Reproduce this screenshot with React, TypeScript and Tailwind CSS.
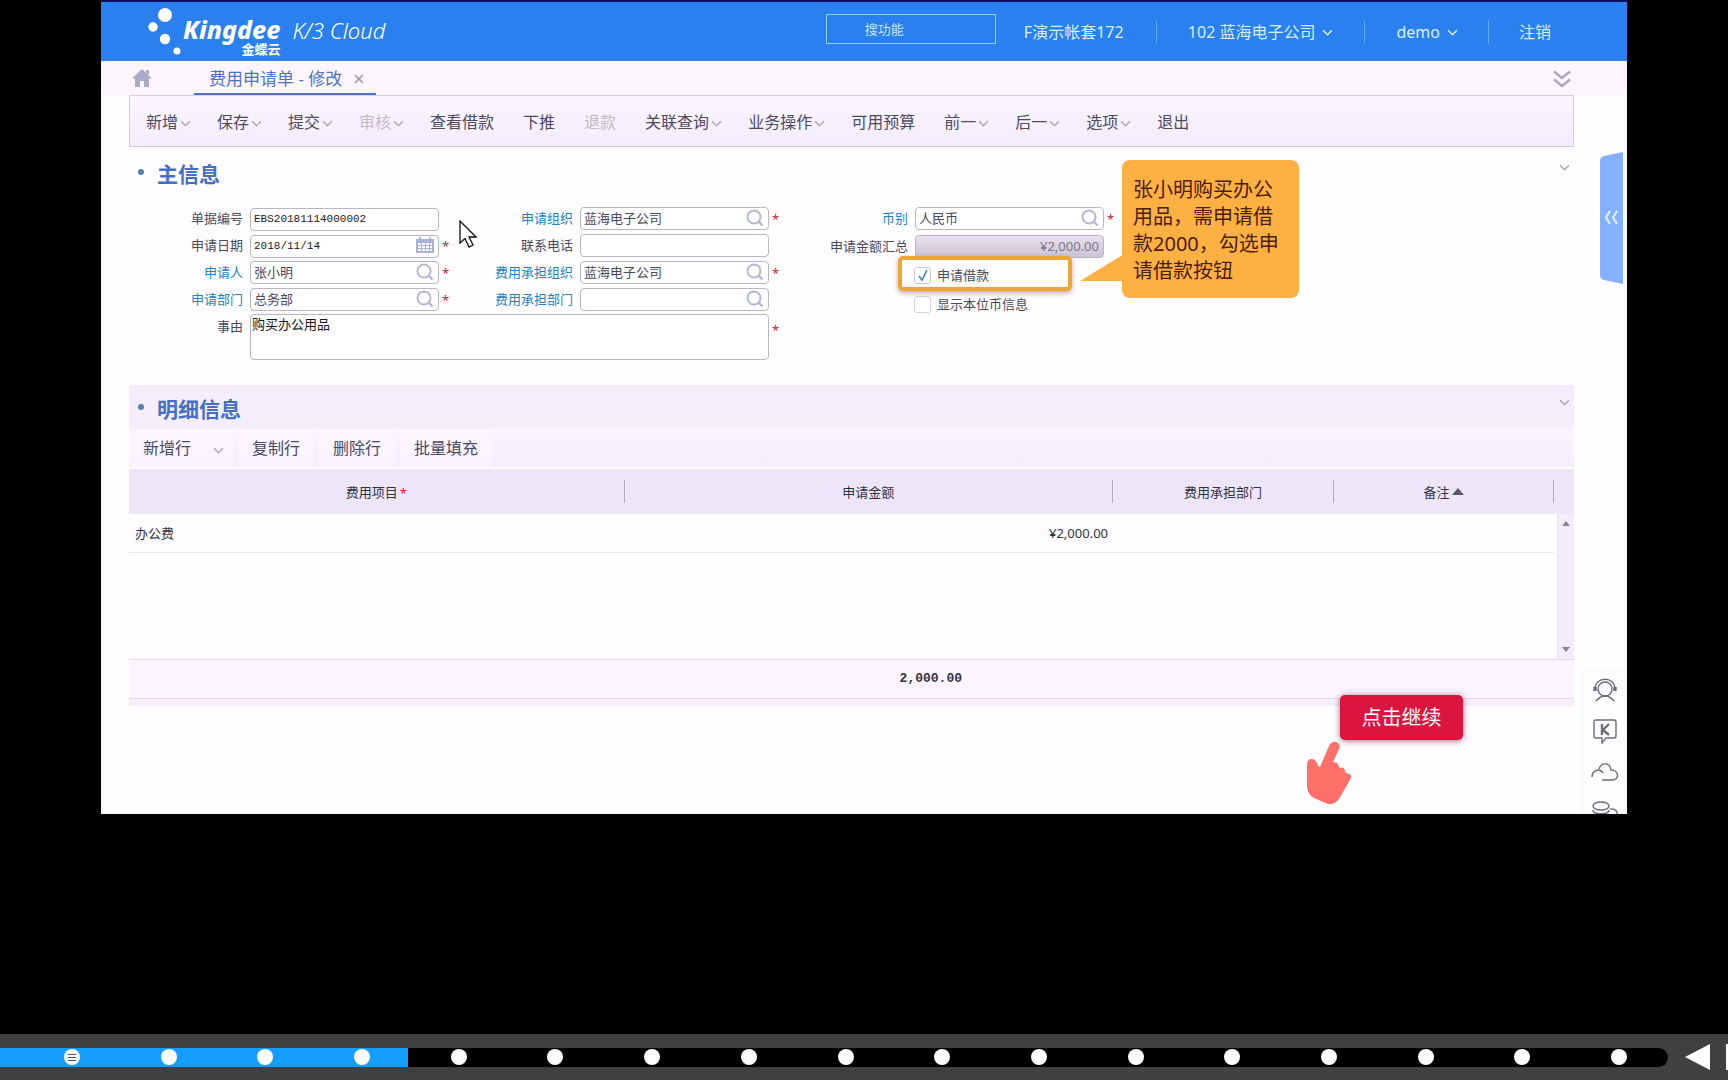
import { useState } from 'react';
import type { ReactNode } from 'react';

type Action = { label: string; menu?: boolean; disabled?: boolean };

const actions: Action[] = [
  { label: '新增', menu: true },
  { label: '保存', menu: true },
  { label: '提交', menu: true },
  { label: '审核', menu: true, disabled: true },
  { label: '查看借款' },
  { label: '下推' },
  { label: '退款', disabled: true },
  { label: '关联查询', menu: true },
  { label: '业务操作', menu: true },
  { label: '可用预算' },
  { label: '前一', menu: true },
  { label: '后一', menu: true },
  { label: '选项', menu: true },
  { label: '退出' },
];

const STEPS = 17;

const inputCls = 'w-full h-[23px] pl-[3px] pb-[2px] leading-5 rounded-[4px] border border-[#b9b5c6] bg-white focus:outline-none focus:border-[#2a82f0]';
const textCls = 'text-[13px] text-[#4b4960]';
const monoCls = 'font-[Liberation_Mono,monospace] text-[11px] text-[#1c1a24]';
const rowBtnCls = 'h-[38px] px-[14px] text-base leading-6 text-[#484a68] bg-[#fdf5fe]/70';
const dividerCls = 'w-px h-6 bg-[#5fa8f7]';

function Chevron({ className = '' }: { className?: string }) {
  return (
    <svg viewBox="0 0 12 8" className={`w-[11px] h-[7px] shrink-0 ${className}`} fill="none" stroke="currentColor" strokeWidth="1.8">
      <path d="M1 1.5 6 6.5 11 1.5" />
    </svg>
  );
}

function SearchIcon() {
  return (
    <svg viewBox="0 0 18 18" className="w-[18px] h-[18px]" fill="none" stroke="#b4b6d2" strokeWidth="2">
      <circle cx="8" cy="8" r="6.5" />
      <path d="M12.5 12.5 16.5 16.5" strokeWidth="2.4" />
    </svg>
  );
}

function CalendarIcon() {
  return (
    <svg viewBox="0 0 18 16" className="w-[18px] h-4">
      <path d="M0 2h18v14H0z" fill="#a9b3da" />
      <path d="M3 0h2v3H3zM13 0h2v3h-2z" fill="#a9b3da" />
      <path d="M2 6h3v2H2zM6 6h3v2H6zM10 6h3v2h-3zM14 6h2v2h-2zM2 9h3v2H2zM6 9h3v2H6zM10 9h3v2h-3zM14 9h2v2h-2zM2 12h3v2H2zM6 12h3v2H6zM10 12h3v2h-3zM14 12h2v2h-2z" fill="#fff" />
    </svg>
  );
}

function Star({ className = '' }: { className?: string }) {
  return <span className={`pt-[3px] text-[13px] leading-4 text-[#c81e3c] ${className}`}>*</span>;
}

type FieldProps = {
  id: string;
  label: string;
  value?: string;
  link?: boolean;
  required?: boolean;
  icon?: ReactNode;
  inputClass?: string;
};

function Field({ id, label, value = '', link, required, icon, inputClass = textCls }: FieldProps) {
  return (
    <div className="flex items-center h-[23px]">
      <label htmlFor={id} className={`w-[114px] mr-[7px] shrink-0 text-right text-[13px] leading-5 ${link ? 'text-[#2582c4]' : 'text-[#4b4960]'}`}>
        {label}
      </label>
      <div className="relative w-[189px] shrink-0">
        <input id={id} defaultValue={value} className={`${inputCls} ${inputClass}`} />
        {icon && <span className="absolute right-[5px] inset-y-0 flex items-center">{icon}</span>}
      </div>
      {required && <Star className="ml-[3px]" />}
    </div>
  );
}

function SectionTitle({ children }: { children: ReactNode }) {
  return (
    <div className="flex items-start justify-between h-[44px] pt-[8px] pl-[9px] pr-[4px]">
      <div className="flex items-start">
        <span className="w-[6px] h-[6px] mt-[11px] rounded-full bg-[#5081b8]" />
        <h2 className="ml-[13px] text-[21px] leading-8 font-bold text-[#456fc4]">{children}</h2>
      </div>
      <button aria-label="收起" className="mt-[6px] text-[#a9a3b6]"><Chevron /></button>
    </div>
  );
}

function Header() {
  return (
    <header className="flex items-start h-[61px] shrink-0 border-t-2 border-[#02105e] bg-[#2a80ef] text-[#d6efff]">
      <div className="flex items-start pl-[46px] text-white">
        <svg viewBox="0 0 36 56" className="w-9 h-14" fill="currentColor">
          <circle cx="18" cy="13" r="7" />
          <circle cx="6" cy="25" r="4.7" />
          <circle cx="18" cy="37" r="5.2" />
          <circle cx="30" cy="49" r="3.5" />
        </svg>
        <div className="flex flex-col items-end pt-[14px]">
          <span className="text-[25px] leading-[26px] font-extrabold italic">Kingdee</span>
          <span className="text-[13px] leading-[14px] font-bold">金蝶云</span>
        </div>
        <span className="ml-[12px] pt-[14px] text-[22px] leading-7 italic font-light">K/3 Cloud</span>
      </div>
      <div className="flex items-start ml-auto pt-[12px] pr-[76px] text-base leading-6">
        <input
          aria-label="搜功能"
          placeholder="搜功能"
          className="w-[170px] h-[30px] mr-[28px] pl-[38px] text-[13px] border border-[#8fd0ff] bg-transparent placeholder:text-[#c4e4ff] focus:outline-none"
        />
        <div className="flex items-center pt-[6px]">
          <span className="w-[101px]">F演示帐套172</span>
          <span className={`mx-[31px] ${dividerCls}`} />
          <button className="flex items-center gap-[7px]">102 蓝海电子公司<Chevron /></button>
          <span className={`mx-[31px] ${dividerCls}`} />
          <button className="flex items-center gap-[7px]">demo<Chevron /></button>
          <span className={`mx-[30px] ${dividerCls}`} />
          <button>注销</button>
        </div>
      </div>
    </header>
  );
}

function TabBar() {
  return (
    <nav className="flex items-stretch h-[34px] bg-[#fdf6fe] pl-[31px] pr-[55px]">
      <button aria-label="首页" className="text-[#a9a9c9]">
        <svg viewBox="0 0 20 18" className="w-5 h-[18px]" fill="currentColor">
          <path d="M10 0 20 9.5h-3V18h-5v-6H8v6H3V9.5H0L7 2.8Z" />
          <path d="M14 1h3v5l-3-2.5z" />
        </svg>
      </button>
      <div className="flex items-center ml-[42px] w-[182px] pl-[15px] pt-[4px] border-b-2 border-[#4f74bd]">
        <button className="text-[17px] leading-6 text-[#4d74c4] whitespace-nowrap">费用申请单 - 修改</button>
        <button aria-label="关闭" className="ml-[12px] text-[#9d9bb5]">
          <svg viewBox="0 0 10 10" className="w-[10px] h-[10px]" stroke="currentColor" strokeWidth="1.7">
            <path d="M1 1 9 9M9 1 1 9" />
          </svg>
        </button>
      </div>
      <button aria-label="更多" className="ml-auto self-center pt-[2px] text-[#aaa6bf]">
        <svg viewBox="0 0 20 18" className="w-5 h-[18px]" fill="none" stroke="currentColor" strokeWidth="2.4">
          <path d="M2 1.5 10 8 18 1.5M2 9.5 10 16 18 9.5" />
        </svg>
      </button>
    </nav>
  );
}

function Toolbar() {
  return (
    <div className="flex items-center gap-[29px] h-[52px] pl-[16px] pt-[2px] border border-[#d6cbe0] bg-linear-to-b from-[#fcf5fe] to-[#f2ecfd]">
      {actions.map((a) => (
        <button
          key={a.label}
          disabled={a.disabled}
          className={`flex items-center text-base leading-6 whitespace-nowrap ${a.disabled ? 'text-[#c3bacb]' : 'text-[#4c4a62]'}`}
        >
          {a.label}
          {a.menu && <Chevron className="ml-[2px] -mr-[3px] mt-[2px] text-[#b0a8c0]" />}
        </button>
      ))}
    </div>
  );
}

function Callout() {
  return (
    <div className="absolute left-[328px] -top-[46px] w-[177px] h-[138px] pl-[11px] pt-[16px] rounded-[8px] bg-[#ffb042] text-[20px] leading-[27px] text-[#4a200c] whitespace-nowrap">
      <svg viewBox="0 0 44 28" className="absolute -left-[42px] top-[94px] w-11 h-7" fill="#ffb042">
        <path d="M44 0 0 27H44Z" />
      </svg>
      <p>张小明购买办公</p>
      <p>用品，需申请借</p>
      <p>款2000，勾选申</p>
      <p>请借款按钮</p>
    </div>
  );
}

function MainInfo() {
  const [loan, setLoan] = useState(true);
  const [local, setLocal] = useState(false);

  return (
    <section className="relative pt-[3px]">
      <SectionTitle>主信息</SectionTitle>
      <div className="flex items-start pt-[12px] pb-[25px]">
        <div className="w-[665px] shrink-0">
          <div className="flex">
            <div className="flex flex-col gap-1 w-[330px]">
              <Field id="billNo" label="单据编号" value="EBS20181114000002" inputClass={monoCls} />
              <Field id="date" label="申请日期" value="2018/11/14" required icon={<CalendarIcon />} inputClass={monoCls} />
              <Field id="applicant" label="申请人" value="张小明" link required icon={<SearchIcon />} />
              <Field id="dept" label="申请部门" value="总务部" link required icon={<SearchIcon />} />
            </div>
            <div className="flex flex-col gap-1">
              <Field id="org" label="申请组织" value="蓝海电子公司" link required icon={<SearchIcon />} />
              <Field id="phone" label="联系电话" />
              <Field id="costOrg" label="费用承担组织" value="蓝海电子公司" link required icon={<SearchIcon />} />
              <Field id="costDept" label="费用承担部门" link icon={<SearchIcon />} />
            </div>
          </div>
          <div className="flex items-start mt-1">
            <label htmlFor="reason" className="w-[114px] mr-[7px] pt-[2px] text-right text-[13px] leading-5 text-[#4b4960]">事由</label>
            <textarea
              id="reason"
              defaultValue="购买办公用品"
              className="w-[519px] h-[46px] px-px text-[13px] leading-[18px] text-[#16141c] rounded-[4px] border border-[#b9b5c6] bg-white resize-none focus:outline-none"
            />
            <Star className="ml-[3px] mt-[5px]" />
          </div>
        </div>
        <div className="relative flex flex-col">
          <div className="flex flex-col gap-[5px]">
            <Field id="currency" label="币别" value="人民币" link required icon={<SearchIcon />} />
            <Field id="total" label="申请金额汇总" value="¥2,000.00" inputClass="pr-[4px] text-right text-[13px] text-[#7c7688] bg-linear-to-b from-[#e9e1ee] to-[#cbc3d4]" />
          </div>
          <label className="relative flex items-center w-[174px] h-[35px] ml-[104px] -mt-px pl-[12px] pt-[3px] rounded-[5px] border-4 border-[#eda534] bg-[#fffdff] shadow-[0_2px_5px_rgba(120,60,60,0.45)] text-[13px] leading-5 text-[#4b4960]">
            <input type="checkbox" checked={loan} onChange={(e) => setLoan(e.target.checked)} className="appearance-none w-[17px] h-[17px] mr-[6px] rounded-[3px] border border-[#cfc8dc] bg-white" />
            {loan && (
              <svg viewBox="0 0 10 12" className="absolute left-[16px] top-[9px] w-[10px] h-3 pointer-events-none" fill="none" stroke="#3d86b8" strokeWidth="1.6">
                <path d="M1 7 4 11 9 1" />
              </svg>
            )}
            申请借款
          </label>
          <label className="flex items-center h-5 ml-[120px] mt-[3px] text-[13px] leading-5 text-[#4b4960]">
            <input type="checkbox" checked={local} onChange={(e) => setLocal(e.target.checked)} className="appearance-none w-[17px] h-[17px] mr-[6px] rounded-[3px] border border-[#d8d0e2] bg-white" />
            显示本位币信息
          </label>
          <Callout />
        </div>
      </div>

      {/* Mouse pointer */}
      <svg viewBox="0 0 18 28" className="absolute left-[330px] top-[73px] w-[18px] h-7" fill="#fff" stroke="#111" strokeWidth="1.3">
        <path d="M1 1v22l5-4.5 4 8.5 4-2-4-8h7Z" />
      </svg>
    </section>
  );
}

function HeadCell({ children }: { children: ReactNode }) {
  return (
    <th className="p-0 font-normal">
      <div className="flex items-center justify-center gap-[2px] h-[23px] border-r border-[#b3aabd]">{children}</div>
    </th>
  );
}

function Details() {
  return (
    <section className="relative">
      <div className="bg-[#f4edfb]">
        <SectionTitle>明细信息</SectionTitle>
      </div>
      <div className="flex gap-[5px] h-[38px] bg-linear-to-b from-[#fbf5fe] to-[#f4eefd]">
        <button className="flex items-center h-[38px] pl-[14px] pr-[9px] text-base leading-6 text-[#484a68] bg-[#fdf5fe]/70">
          新增行<Chevron className="ml-[22px] mt-1 text-[#b0a8c0]" />
        </button>
        <button className={rowBtnCls}>复制行</button>
        <button className={rowBtnCls}>删除行</button>
        <button className={rowBtnCls}>批量填充</button>
      </div>
      <table className="w-full mt-[2px] table-fixed border-collapse text-[13px] leading-5 text-[#34313f]">
        <colgroup>
          <col className="w-[34.3%]" />
          <col className="w-[33.8%]" />
          <col className="w-[15.3%]" />
          <col />
          <col className="w-[20px]" />
        </colgroup>
        <thead>
          <tr className="h-[45px] bg-[#ede6fa]">
            <HeadCell>费用项目<Star /></HeadCell>
            <HeadCell>申请金额</HeadCell>
            <HeadCell>费用承担部门</HeadCell>
            <HeadCell>
              备注
              <svg viewBox="0 0 12 7" className="w-3 h-[7px]" fill="#5d5668"><path d="M6 0 12 7H0Z" /></svg>
            </HeadCell>
            <th className="p-0" />
          </tr>
        </thead>
        <tbody>
          <tr className="h-[38px]">
            <td className="p-0 pl-[6px] border-b border-[#f0e2f0]">办公费</td>
            <td className="p-0 pr-[5px] text-right border-b border-[#f0e2f0]">¥2,000.00</td>
            <td className="p-0 border-b border-[#f0e2f0]" />
            <td className="p-0 border-b border-[#f0e2f0]" />
            <td rowSpan={2} className="p-0">
              <div className="flex flex-col items-center justify-between h-[145px] ml-[3px] py-[7px] border-l border-[#e8dcee] bg-[#f5ecfa] text-[#8d8496]">
                <svg viewBox="0 0 8 5" className="w-2 h-[5px]" fill="currentColor"><path d="M4 0 8 5H0Z" /></svg>
                <svg viewBox="0 0 8 5" className="w-2 h-[5px]" fill="currentColor"><path d="M0 0h8L4 5Z" /></svg>
              </div>
            </td>
          </tr>
          <tr className="h-[107px]">
            <td colSpan={4} />
          </tr>
        </tbody>
        <tfoot>
          <tr className="h-[39px] bg-[#fcf4fe] border-y border-[#e2d6e8]">
            <td />
            <td className="p-0 pl-[124px] text-center font-bold font-[Liberation_Mono,monospace]">2,000.00</td>
            <td colSpan={3} />
          </tr>
        </tfoot>
      </table>
      <div className="h-[7px] bg-[#f6eefb]" />

      {/* Continue prompt */}
      <button className="absolute right-[111px] top-[310px] w-[123px] h-[45px] rounded-[5px] bg-[#dc1440] text-[20px] leading-7 text-white shadow-[0_1px_6px_rgba(80,20,60,0.6)]">
        点击继续
      </button>
      <svg viewBox="0 0 46 64" className="absolute right-[222px] top-[356px] w-[46px] h-16" fill="#ff7168">
        <path d="M1 24Q1 18 6 18 10 18 12 25L14 26 23 5Q26 0 30 1 35 3 33 8L27 21 31 22 34 27Q38 25 39 30L40 32Q46 33 45 37L33 58Q29 64 22 63L8 57Q2 54 1 46Z" />
      </svg>
    </section>
  );
}

function SideDock() {
  return (
    <aside className="absolute right-0 bottom-0 w-[45px] h-[144px] overflow-hidden border-l border-t border-[#f8f0fb] bg-[#fffdff]">
      <div className="flex flex-col items-center gap-[15px] pt-[6px] text-[#706b7a]">
        <button aria-label="客服">
          <svg viewBox="0 0 26 26" className="w-[26px] h-[26px]" fill="none" stroke="currentColor" strokeWidth="1.4">
            <path d="M3 12C3 -1 23 -1 23 12" />
            <circle cx="13" cy="12" r="7" />
            <path d="M4 24Q8 19 13 19T22 24" />
            <path d="M3 10v4M23 10v4" strokeWidth="3.4" />
          </svg>
        </button>
        <button aria-label="社区">
          <svg viewBox="0 0 26 26" className="w-[26px] h-[26px]" fill="none" stroke="currentColor" strokeWidth="1.4">
            <path d="M4 2H22Q24 2 24 4V18Q24 20 22 20H14L10 25V20H4Q2 20 2 18V4Q2 2 4 2Z" />
            <path d="M10 6v11M17 6l-6 6 6 5" strokeWidth="2.4" />
          </svg>
        </button>
        <button aria-label="云服务">
          <svg viewBox="0 0 28 26" className="w-7 h-[26px]" fill="none" stroke="currentColor" strokeWidth="1.4">
            <path d="M1 18C1 12 8 8 12 14M8 10C10 3 19 3 20 11 28 11 29 21 21 21H11" />
          </svg>
        </button>
        <button aria-label="数据">
          <svg viewBox="0 0 28 26" className="w-7 h-[26px]" fill="none" stroke="currentColor" strokeWidth="1.4">
            <ellipse cx="10" cy="6" rx="8" ry="4" />
            <path d="M2 10c0 5 16 5 16 0M19 9c6-1 8 3 7 8" />
          </svg>
        </button>
      </div>
    </aside>
  );
}

function Player() {
  const [step, setStep] = useState(4);
  return (
    <footer className="flex items-center h-[46px] mt-auto bg-[#404040]">
      <div className="relative flex-1 flex items-center justify-between h-[19px] pl-[64px] pr-[41px] rounded-r-full bg-black">
        <div className="absolute left-0 inset-y-0 bg-[#149fff]" style={{ width: `${((step * 96 + 24) / 1668) * 100}%` }} />
        {Array.from({ length: STEPS }, (_, i) => (
          <button
            key={i}
            aria-label={`第${i + 1}步`}
            onClick={() => setStep(i + 1)}
            className="relative flex flex-col items-center justify-center gap-[2px] w-4 h-4 rounded-full bg-white"
          >
            {i === 0 && [0, 1, 2].map((n) => <span key={n} className="w-2 h-px bg-[#555]" />)}
          </button>
        ))}
      </div>
      <div className="flex items-center gap-4 w-[60px] pl-[17px] overflow-hidden text-white">
        <button aria-label="上一步" className="shrink-0">
          <svg viewBox="0 0 25 26" className="w-[25px] h-[26px]" fill="currentColor"><path d="M0 13 25 0V26Z" /></svg>
        </button>
        <button aria-label="播放" className="shrink-0 w-[10px] h-[26px] bg-white" />
      </div>
    </footer>
  );
}

export default function App() {
  return (
    <div className="flex flex-col min-h-screen bg-black font-[Noto_Sans,Noto_Sans_CJK_SC,sans-serif]">
      <main className="relative mx-[101px] overflow-hidden bg-[#fffdff]">
        <Header />
        <TabBar />
        <div className="pl-[28px] pr-[53px] pb-[108px]">
          <Toolbar />
          <MainInfo />
          <Details />
        </div>

        {/* Collapsed side panel */}
        <button aria-label="展开" className="absolute right-[4px] top-[152px] w-[23px] h-[132px]">
          <svg viewBox="0 0 23 132" className="w-full h-full">
            <path d="M23 0V132L4 128Q0 127 0 123V9Q0 5 4 4Z" fill="#86b1ff" />
            <path d="M10 59 6 65.5 10 72M17 59 13 65.5 17 72" fill="none" stroke="#e6f1ff" strokeWidth="2" />
          </svg>
        </button>
        <SideDock />
      </main>
      <Player />
    </div>
  );
}
